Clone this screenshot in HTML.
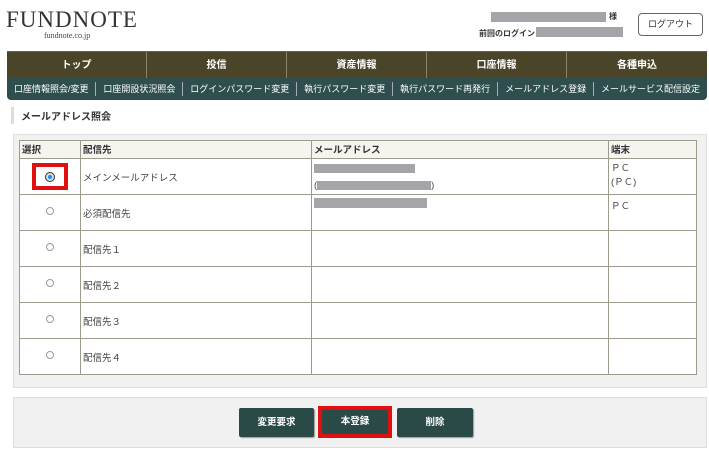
<!DOCTYPE html>
<html><head><meta charset="utf-8"><style>
*{margin:0;padding:0;box-sizing:border-box}
body{width:709px;height:454px;background:#fff;font-family:"Liberation Sans","Noto Sans CJK JP",sans-serif;position:relative;overflow:hidden;color:#333}
.a{position:absolute}
.logo{left:6px;top:7px;font-family:"Liberation Serif",serif;font-size:23px;letter-spacing:1px;color:#333}
.sub{left:44px;top:31px;font-size:8px;font-family:"Liberation Serif",serif;color:#444}
.gb{background:#a5a5a9}
.nav{left:7px;top:51px;width:700px;height:27px;background:#4a4429;display:flex;border-top:1px solid #6a6445}
.nav div{flex:1;color:#fff;font-size:10px;font-weight:bold;text-align:center;line-height:27px;border-right:1px solid #8a8468}
.nav div:last-child{border:none}
.snav{left:7px;top:78px;width:700px;height:22px;background:#2e4f4d;display:flex;border-radius:0 0 4px 4px;align-items:center}
.snav div{flex:auto;color:#fff;font-size:9px;text-align:center;border-right:1px solid #aab;line-height:14px;padding:0 4px}
.snav div:last-child{border:none}
.panel{background:#f1f1f1;border:1px solid #ddd}
table{border-collapse:collapse;position:absolute;left:19px;top:140px;width:678px;background:#fff;font-size:9.5px;color:#444}
td,th{border:1px solid #9e9a8e;vertical-align:top;padding:3px 2px;text-align:left}
th{background:#f6f4ef;height:18px;font-size:9.5px;font-weight:bold;padding:1px 2px;color:#333}
td{height:36px}
td.r{text-align:center;vertical-align:middle}
.rad{display:inline-block;width:8px;height:8px;border:1px solid #999;border-radius:50%}
.btn{top:408px;height:29px;background:#2a4a47;color:#fff;font-size:9.5px;font-weight:bold;text-align:center;line-height:29px;border-radius:2px;box-shadow:1px 1px 1px #999}
</style></head><body>
<div class="a logo">FUNDNOTE</div>
<div class="a sub">fundnote.co.jp</div>
<div class="a gb" style="left:491px;top:12px;width:115px;height:10px"></div>
<div class="a" style="left:609px;top:11px;font-size:8px;font-weight:bold">様</div>
<div class="a" style="left:479px;top:28px;font-size:8px;font-weight:bold">前回のログイン</div>
<div class="a gb" style="left:536px;top:27px;width:87px;height:10px"></div>
<div class="a" style="left:638px;top:13px;width:65px;height:23px;border:1px solid #666;border-radius:4px;font-size:9px;text-align:center;line-height:21px">ログアウト</div>
<div class="a nav"><div style="flex:0 0 140px">トップ</div><div>投信</div><div>資産情報</div><div>口座情報</div><div style="flex:0 0 140px">各種申込</div></div>
<div class="a snav"><div>口座情報照会/変更</div><div>口座開設状況照会</div><div>ログインパスワード変更</div><div>執行パスワード変更</div><div>執行パスワード再発行</div><div>メールアドレス登録</div><div>メールサービス配信設定</div></div>
<div class="a" style="left:11px;top:107px;width:3px;height:17px;background:#ddd"></div>
<div class="a" style="left:21px;top:108px;font-size:10px;font-weight:bold">メールアドレス照会</div>
<div class="a panel" style="left:13px;top:134px;width:694px;height:254px"></div>
<table>
<tr><th style="width:61px">選択</th><th style="width:231px">配信先</th><th style="width:297px">メールアドレス</th><th>端末</th></tr>
<tr><td class="r"><span style="display:inline-block;border:4px solid #e01010;width:36px;height:27px;padding-top:5px;background:#fff"><span class="rad" style="border-color:#333;width:10px;height:10px;background:radial-gradient(circle,#1e90ff 35%,#ddd 40%)"></span></span></td><td style="vertical-align:middle">メインメールアドレス</td><td><div class="gb" style="width:101px;height:9px;margin:2px 0 7px"></div>(<span class="gb" style="display:inline-block;width:114px;height:9px;vertical-align:middle"></span>)</td><td style="line-height:14px">ＰＣ<br>(ＰＣ)</td></tr>
<tr><td class="r"><span class="rad"></span></td><td style="vertical-align:middle">必須配信先</td><td><div class="gb" style="width:113px;height:10px"></div></td><td>ＰＣ</td></tr>
<tr><td class="r"><span class="rad"></span></td><td style="vertical-align:middle">配信先１</td><td></td><td></td></tr>
<tr><td class="r"><span class="rad"></span></td><td style="vertical-align:middle">配信先２</td><td></td><td></td></tr>
<tr><td class="r"><span class="rad"></span></td><td style="vertical-align:middle">配信先３</td><td></td><td></td></tr>
<tr><td class="r"><span class="rad"></span></td><td style="vertical-align:middle">配信先４</td><td></td><td></td></tr>
</table>
<div class="a panel" style="left:13px;top:397px;width:694px;height:51px"></div>
<div class="a btn" style="left:239px;width:75px">変更要求</div>
<div class="a" style="left:318px;top:406px;width:74px;height:32px;background:#e01010"></div>
<div class="a btn" style="left:322px;top:410px;height:24px;line-height:24px;width:66px;box-shadow:none">本登録</div>
<div class="a btn" style="left:397px;width:76px">削除</div>
</body></html>
